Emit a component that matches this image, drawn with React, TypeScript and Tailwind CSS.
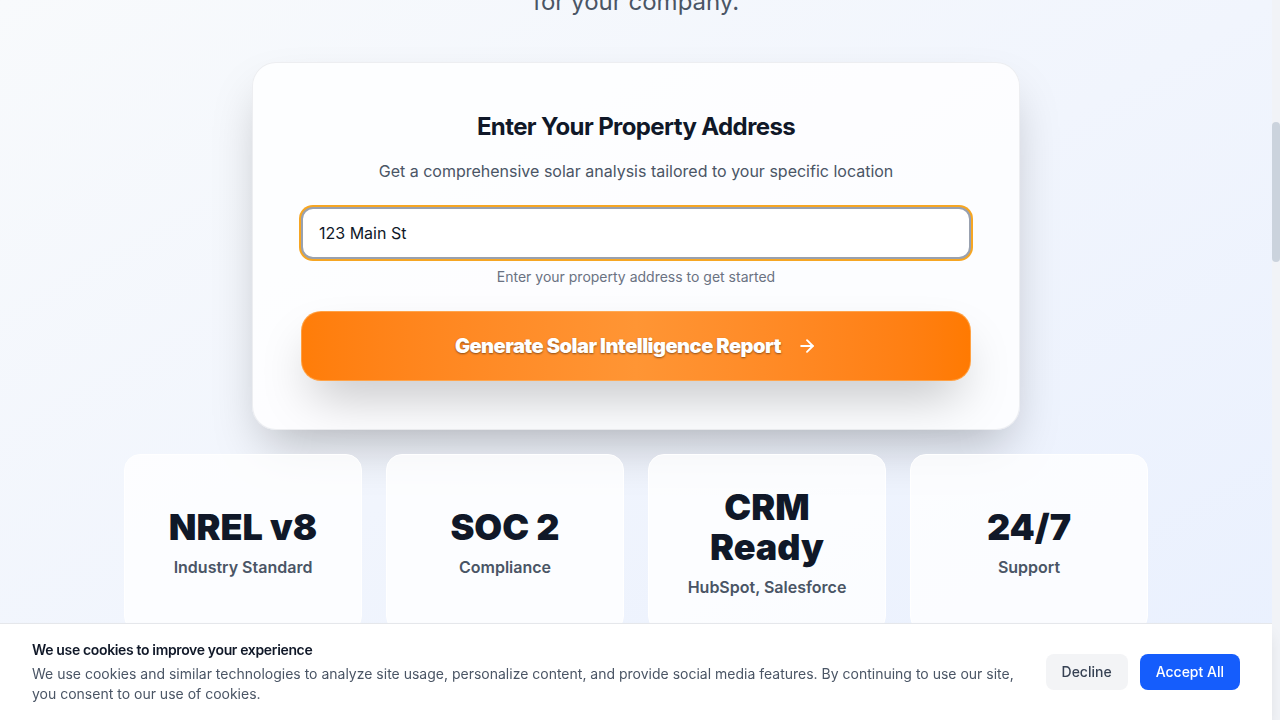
import React, { useEffect, useRef, useState } from 'react';
import { ArrowRight, Sun } from 'lucide-react';

const STATS = [
  { value: 'NREL v8', label: 'Industry Standard' },
  { value: 'SOC 2', label: 'Compliance' },
  { value: 'CRM Ready', label: 'HubSpot, Salesforce' },
  { value: '24/7', label: 'Support' },
];

const STEPS = [
  { title: 'Enter an address', text: 'Type any residential or commercial property address.' },
  { title: 'We run the numbers', text: 'Roof geometry, irradiance, shading and utility rates.' },
  { title: 'Share the report', text: 'Send a branded PDF or push it straight to your CRM.' },
];

export default function App() {
  const scrollRef = useRef<HTMLDivElement>(null);
  const cardRef = useRef<HTMLDivElement>(null);
  const [address, setAddress] = useState('123 Main St');
  const [showCookies, setShowCookies] = useState(true);

  // page is shown scrolled down to the address form
  useEffect(() => {
    if (scrollRef.current && cardRef.current) {
      scrollRef.current.scrollTop = cardRef.current.offsetTop - 62;
    }
  }, []);

  return (
    <div className="flex h-screen font-['Inter',sans-serif] text-gray-900">
      <div
        ref={scrollRef}
        className="relative flex-1 overflow-hidden bg-gradient-to-br from-[#f8fafc] via-[#f1f5fd] to-[#e9f0fe]"
      >
        {/* Nav */}
        <header className="h-20 flex items-center justify-between px-10">
          <div className="flex items-center gap-2 font-bold text-lg">
            <Sun size={22} className="text-orange-500" />
            SolarIQ
          </div>
          <nav className="flex items-center gap-6 text-sm text-gray-600">
            <span>Product</span>
            <span>Pricing</span>
            <span>Contact</span>
          </nav>
        </header>

        <main className="px-6 pt-[220px]">
          {/* Hero */}
          <div className="text-center">
            <div className="mx-auto mb-8 inline-flex h-9 items-center rounded-full bg-orange-100 px-4 text-sm font-semibold text-orange-700">
              Solar intelligence for installers
            </div>
            <h1 className="text-7xl leading-none font-black tracking-tight">
              Solar Reports
              <br />
              in Seconds
            </h1>
            <p className="mt-8 mb-11 text-2xl leading-8 text-gray-600">
              Professional-grade solar analysis powered by NREL data,
              <br />
              branded, shareable and ready to close deals
              <br />
              for your company.
            </p>
          </div>

          {/* Address form */}
          <div
            ref={cardRef}
            className="mx-auto max-w-3xl rounded-3xl border border-gray-200/70 bg-white/80 p-12 shadow-2xl"
          >
            <h2 className="text-center text-2xl font-bold tracking-tight text-gray-900">Enter Your Property Address</h2>
            <p className="mt-4 text-center text-base text-gray-600">
              Get a comprehensive solar analysis tailored to your specific location
            </p>

            <input
              type="text"
              value={address}
              onChange={e => setAddress(e.target.value)}
              className="mt-6 block w-full rounded-xl border-2 border-gray-400 bg-white px-4 py-3 text-base text-gray-900 outline-none ring-2 ring-[#f6a623]"
            />
            <p className="mt-2 text-center text-sm text-gray-500">Enter your property address to get started</p>

            <button className="mt-6 flex w-full items-center justify-center gap-4 rounded-[20px] border border-orange-300/60 bg-gradient-to-r from-[#ff7d08] via-[#ff9534] to-[#ff7a02] py-5 text-xl leading-7 font-black tracking-tight text-white shadow-2xl [text-shadow:0_1px_2px_rgba(0,0,0,0.45)]">
              Generate Solar Intelligence Report
              <ArrowRight size={20} strokeWidth={2.25} />
            </button>
          </div>

          {/* Stats */}
          <div className="mx-auto mt-6 grid max-w-5xl grid-cols-4 gap-6">
            {STATS.map(s => (
              <div
                key={s.value}
                className="flex flex-col items-center justify-center rounded-2xl border border-white bg-white/80 p-8 text-center"
              >
                <div className="text-4xl leading-10 font-black text-gray-900">{s.value}</div>
                <div className="mt-2 text-base font-semibold text-gray-600">{s.label}</div>
              </div>
            ))}
          </div>

          {/* How it works (below the fold) */}
          <section className="mx-auto mt-32 min-h-[1200px] max-w-5xl">
            <h2 className="text-center text-4xl font-black">How it works</h2>
            <div className="mt-12 grid grid-cols-3 gap-6">
              {STEPS.map((step, i) => (
                <div key={step.title} className="rounded-2xl bg-white/75 p-8">
                  <div className="text-sm font-bold text-orange-500">Step {i + 1}</div>
                  <div className="mt-2 text-xl font-bold">{step.title}</div>
                  <p className="mt-2 text-gray-600">{step.text}</p>
                </div>
              ))}
            </div>
          </section>

          <footer className="mx-auto min-h-[1117px] max-w-5xl border-t border-gray-200 pt-12 text-sm text-gray-500">
            © SolarIQ. All rights reserved.
          </footer>
        </main>

        {/* Cookie banner */}
        {showCookies && (
          <div className="fixed bottom-0 left-0 right-2 z-50 border-t border-gray-200 bg-white shadow-lg">
            <div className="flex items-center gap-6 px-8 py-4">
              <div className="flex-1">
                <div className="mb-1 text-sm font-semibold tracking-tight text-gray-900">
                  We use cookies to improve your experience
                </div>
                <p className="text-sm text-gray-600">
                  We use cookies and similar technologies to analyze site usage, personalize content, and provide
                  social media features. By continuing to use our site, you consent to our use of cookies.
                </p>
              </div>
              <div className="flex shrink-0 items-center gap-3">
                <button
                  onClick={() => setShowCookies(false)}
                  className="rounded-lg bg-gray-100 px-4 py-2 text-sm font-medium text-gray-700"
                >
                  Decline
                </button>
                <button
                  onClick={() => setShowCookies(false)}
                  className="rounded-lg bg-blue-600 px-4 py-2 text-sm font-medium text-white"
                >
                  Accept All
                </button>
              </div>
            </div>
          </div>
        )}
      </div>

      {/* Scrollbar */}
      <div className="w-2 shrink-0 bg-[#f1f3f7]">
        <div className="mt-[122px] h-[140px] rounded-full bg-[#cbd3dd]" />
      </div>
    </div>
  );
}
